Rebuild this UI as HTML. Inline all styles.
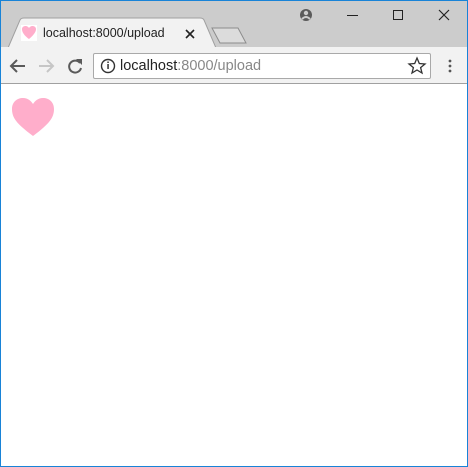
<!DOCTYPE html>
<html><head><style>
*{margin:0;padding:0;box-sizing:border-box}
body{width:468px;height:467px;position:relative;overflow:hidden;background:#fff;font-family:"Liberation Sans",sans-serif}
.frame{position:absolute;inset:0;border:1px solid #1883d7;z-index:10;pointer-events:none}
.title{position:absolute;left:0;top:0;width:468px;height:48px;background:#cccccc}
.tb{position:absolute;left:0;top:47px;width:468px;height:37px;background:#f2f2f2;border-bottom:1px solid #a0a0a0}
.omni{position:absolute;left:93px;top:53px;width:338px;height:26px;background:#fff;border:1px solid #a9a9a9;border-radius:2px}
.t{position:absolute;font-size:13px;color:#222;white-space:nowrap}
</style></head><body>
<div class="title"></div>
<svg style="position:absolute;left:0;top:0" width="468" height="48">
<path d="M8 48 L20 20 Q21 18 24 18 L200 18 Q203 18 204 20 L216 48 Z" fill="#f2f2f2" stroke="#a0a0a0"/>
<path d="M212 28 L238 28 L246 43 L220 43 Z" fill="#dcdcdc" stroke="#8c8c8c"/>
<circle cx="306" cy="15" r="6" fill="#5a5a5a"/><circle cx="306" cy="13" r="2.2" fill="#ccc"/><path d="M302 19 Q306 15 310 19" stroke="#ccc" stroke-width="2" fill="none"/>
<line x1="347" y1="15.5" x2="358" y2="15.5" stroke="#222"/>
<rect x="393.5" y="10.5" width="9" height="9" fill="none" stroke="#222"/>
<path d="M439 10 L449 20 M449 10 L439 20" stroke="#222" stroke-width="1.2"/>
<rect x="21" y="25" width="16" height="16" fill="#fff"/>
<path d="M29 39 C22 34 22 30 22 29 C22 27 24 26 25.5 26 C27 26 28.5 27 29 28 C29.5 27 31 26 32.5 26 C34 26 36 27 36 29 C36 31 35 34 29 39 Z" fill="#ffaecb"/>
<path d="M186 30 L194 38 M194 30 L186 38" stroke="#222" stroke-width="1.6"/>
</svg>
<div class="t" style="left:43px;top:26px;font-size:12.5px">localhost:8000/upload</div>
<div class="tb"></div>
<div class="omni"></div>
<svg style="position:absolute;left:0;top:47px" width="468" height="37">
<path d="M11 19 L25 19 M17 13 L11 19 L17 25" stroke="#5a5a5a" stroke-width="2" fill="none"/>
<path d="M39 19 L53 19 M47 13 L53 19 L47 25" stroke="#c6c6c6" stroke-width="2" fill="none"/>
<path d="M80 16 A6 6 0 1 0 81 21" stroke="#5a5a5a" stroke-width="2" fill="none"/><path d="M76 12 L82 12 L82 18 Z" fill="#5a5a5a"/>
<circle cx="108" cy="19" r="6.5" fill="none" stroke="#333" stroke-width="1.4"/><rect x="107.3" y="17" width="1.5" height="5" fill="#333"/><rect x="107.3" y="14.5" width="1.5" height="1.5" fill="#333"/>
<path d="M417 11 L419.3 16.5 L425 17 L420.6 20.6 L422 26 L417 23 L412 26 L413.4 20.6 L409 17 L414.7 16.5 Z" fill="none" stroke="#333" stroke-width="1.3"/>
<circle cx="450" cy="14" r="1.4" fill="#555"/><circle cx="450" cy="19" r="1.4" fill="#555"/><circle cx="450" cy="24" r="1.4" fill="#555"/>
</svg>
<div class="t" style="left:120px;top:58px;font-size:14.5px">localhost<span style="color:#888">:8000/upload</span></div>
<svg style="position:absolute;left:11px;top:96px" width="46" height="42">
<path d="M22 40 C6 28 1 22 1 13 C1 6 6 2 12 2 C17 2 20 5 22 8 C24 5 27 2 32 2 C38 2 43 6 43 13 C43 22 38 28 22 40 Z" fill="#ffaecb"/>
</svg>
<div class="frame"></div>
</body></html>
